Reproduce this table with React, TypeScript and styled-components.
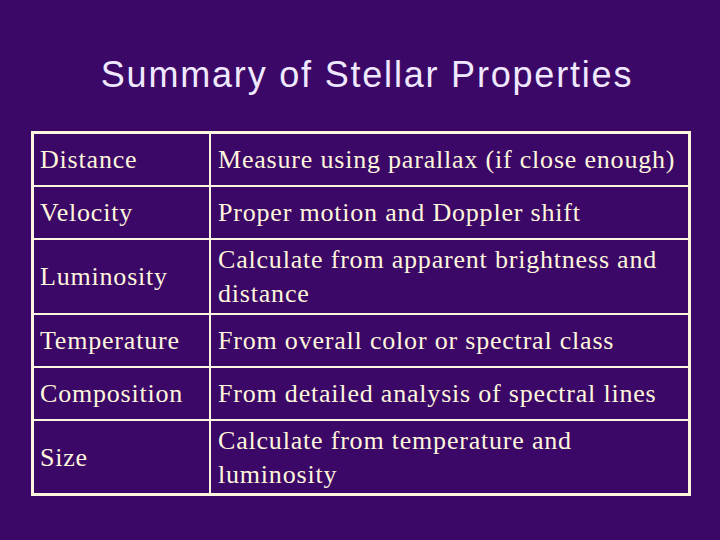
import React from 'react';
import styled, { createGlobalStyle } from 'styled-components';

const GlobalStyle = createGlobalStyle`
  html, body {
    margin: 0;
    padding: 0;
    background: #3b0868;
  }
`

const Slide = styled.div`
  width: 720px;
  height: 540px;
  background: #3b0868;
  display: flex;
  flex-direction: column;
  align-items: center;
  box-sizing: border-box;
  padding-top: 55px;
`
const Title = styled.h1`
  margin: 0;
  font-family: "Liberation Sans", Arial, sans-serif;
  font-weight: normal;
  font-size: 36px;
  letter-spacing: 1.8px;
  line-height: 40px;
  color: #f0e8ff;
  padding-left: 14px;
`
const Table = styled.table`
  margin-top: 36px;
  margin-left: 2px;
  width: 660px;
  border-collapse: collapse;
  border: 3px solid #fff6e0;
  font-family: "Liberation Serif", "Times New Roman", serif;
  font-size: 26px;
  letter-spacing: 0.8px;
  color: #fff6dc;
`
const Row = styled.tr<{ $tall?: boolean }>`
  height: ${(p) => (p.$tall ? 75 : 53)}px;
`
const Cell = styled.td<{ $first?: boolean }>`
  border: 2px solid #fff6e0;
  padding: 2px 4px 0 ${(p) => (p.$first ? 6 : 7)}px;
  line-height: 34px;
  vertical-align: middle;
  width: ${(p) => (p.$first ? '165px' : 'auto')};
`

const rows: [string, string, boolean][] = [
  ['Distance', 'Measure using parallax (if close enough)', false],
  ['Velocity', 'Proper motion and Doppler shift', false],
  ['Luminosity', 'Calculate from apparent brightness and distance', true],
  ['Temperature', 'From overall color or spectral class', false],
  ['Composition', 'From detailed analysis of spectral lines', false],
  ['Size', 'Calculate from temperature and luminosity', true],
]

export default function App() {
  return (
    <>
      <GlobalStyle />
      <Slide>
        <Title>Summary of Stellar Properties</Title>
        <Table>
          <tbody>
            {rows.map(([name, how, tall]) => (
              <Row key={name} $tall={tall}>
                <Cell $first>{name}</Cell>
                <Cell>{how}</Cell>
              </Row>
            ))}
          </tbody>
        </Table>
      </Slide>
    </>
  );
}
